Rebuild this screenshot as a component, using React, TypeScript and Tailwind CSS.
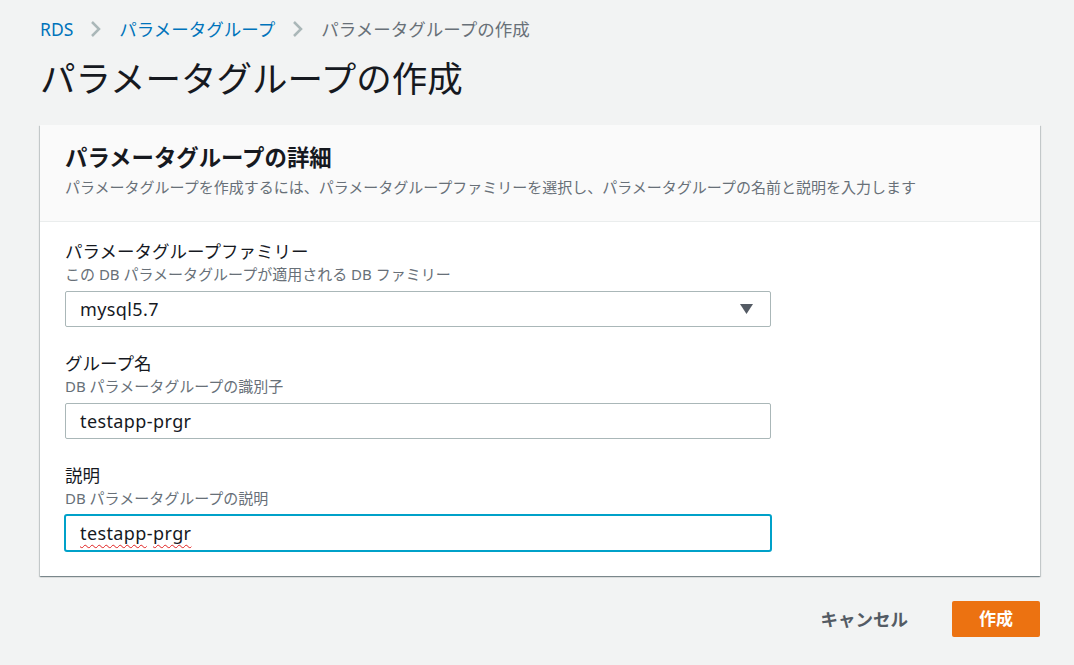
import React from "react";

const font = { fontFamily: '"Noto Sans", "Noto Sans CJK JP", sans-serif' };

const Chevron = () => (
  <svg width="12" height="18" viewBox="0 0 12 18" className="mx-[17px]">
    <path d="M2 2l7 7-7 7" fill="none" stroke="#aab7b8" strokeWidth="2.5" />
  </svg>
);

const Field = ({ label, hint, children }: { label: string; hint: string; children: React.ReactNode }) => (
  <div>
    <div className="text-[17.5px] leading-[26px] text-[#16191f]">{label}</div>
    <div className="text-[15px] leading-[20px] text-[#687078]">{hint}</div>
    <div className="mt-[7px]">{children}</div>
  </div>
);

const squiggle =
  "underline decoration-wavy decoration-[#e02020] decoration-1 underline-offset-[4px] [text-decoration-skip-ink:none]";

export default function App() {
  return (
    <div className="min-h-[665px] bg-[#f2f3f3] px-[40px] pt-[17px] pb-[27px]" style={font}>
      <nav className="flex items-center h-[24px] text-[17.5px]">
        <span className="text-[#0073bb]">RDS</span>
        <Chevron />
        <span className="text-[#0073bb]">パラメータグループ</span>
        <Chevron />
        <span className="text-[#687078]">パラメータグループの作成</span>
      </nav>
      <h1 className="mt-[15px] text-[35.5px] leading-[44px] text-[#16191f] font-normal">パラメータグループの作成</h1>

      <div className="mt-[25px] w-[1000px] bg-white shadow-[0_1px_1px_0_rgba(0,28,36,0.3),1px_1px_1px_0_rgba(0,28,36,0.15),-1px_1px_1px_0_rgba(0,28,36,0.15)]">
        <div className="bg-[#fafafa] border-b border-[#eaeded] px-[25px] pt-[18px] pb-[23px]">
          <h2 className="text-[22.4px] leading-[30px] font-bold text-[#16191f]">パラメータグループの詳細</h2>
          <p className="mt-[3px] text-[15px] leading-[22px] text-[#687078]">
            パラメータグループを作成するには、パラメータグループファミリーを選択し、パラメータグループの名前と説明を入力します
          </p>
        </div>
        <div className="px-[25px] pt-[16px] pb-[24px] flex flex-col gap-[23px]">
          <Field label="パラメータグループファミリー" hint="この DB パラメータグループが適用される DB ファミリー">
            <div className="w-[706px] h-[36px] border border-[#aab7b8] rounded-[2px] flex items-center justify-between pl-[14px] pr-[17px] text-[18px] tracking-[0.4px] text-[#16191f]">
              <span>mysql5.7</span>
              <svg width="13" height="10" viewBox="0 0 13 10">
                <path d="M0 0h13L6.5 10z" fill="#545b64" />
              </svg>
            </div>
          </Field>
          <Field label="グループ名" hint="DB パラメータグループの識別子">
            <div className="w-[706px] h-[36px] border border-[#aab7b8] rounded-[2px] flex items-center pl-[14px] text-[18px] tracking-[0.4px] text-[#16191f]">
              testapp-prgr
            </div>
          </Field>
          <Field label="説明" hint="DB パラメータグループの説明">
            <div className="w-[708px] h-[38px] -ml-[1px] -mt-[1px] border-2 border-[#00a1c9] rounded-[3px] flex items-center pl-[14px] text-[18px] tracking-[0.4px] text-[#16191f]">
              <span className={squiggle}>testapp</span>
              <span>-</span>
              <span className={squiggle}>prgr</span>
            </div>
          </Field>
        </div>
      </div>

      <div className="w-[1000px] mt-[25px] flex items-center justify-end">
        <button className="text-[17.5px] font-bold text-[#545b64]">キャンセル</button>
        <button className="ml-[44px] w-[88px] h-[36px] rounded-[2px] bg-[#ec7211] text-white text-[17px] font-bold">作成</button>
      </div>
    </div>
  );
}
